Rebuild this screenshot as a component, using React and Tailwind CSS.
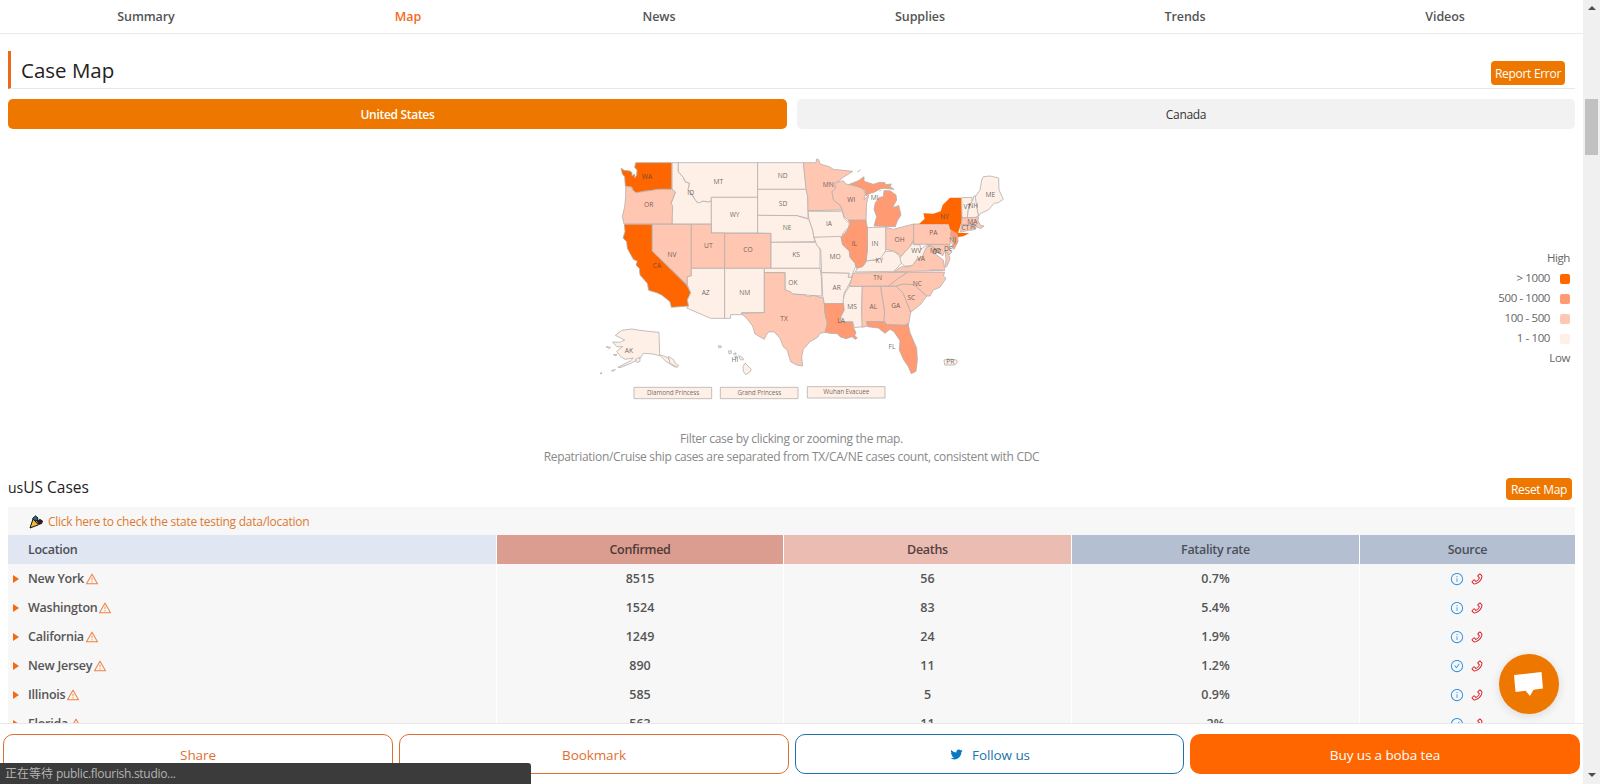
import React from "react";
import {
  AiOutlineWarning,
  AiOutlineInfoCircle,
  AiOutlineCheckCircle,
  AiOutlinePhone,
  AiOutlineTwitter,
} from "react-icons/ai";

const C1 = "#fff0e7";
const C2 = "#ffc6b1";
const C3 = "#ff9a73";
const C4 = "#ff6600";

// Map shapes: [fill, polygon points]. Units are a third of a pixel.
const WEST = [
  [C1, "246,38 265,38 265,65 280,82 285,95 298,100 294,120 305,135 322,158 340,153 355,156 364,152 364,222 246,222 244,160 256,126 246,118"],
  [C1, "265,38 503,38 503,142 364,142 364,152 355,156 340,153 325,159 316,150 305,130 294,120 299,100 286,95 280,82 265,65"],
  [C4, "93,54 102,61 120,63 126,68 126,78 134,72 134,84 140,76 141,60 134,52 137,38 245,38 245,118 205,118 185,122 165,123 150,127 138,128 130,122 126,112 106,108 105,95 104,80 97,72"],
  [C2, "107,110 122,110 130,122 138,128 165,124 205,118 246,118 256,126 250,142 243,158 248,168 246,222 102,222 97,200 104,170 107,140"],
  [C2, "186,223 304,223 304,378 292,380 292,405 186,303"],
  [C4, "103,223 186,223 186,303 290,405 302,428 292,450 296,468 244,472 240,455 215,435 200,428 176,421 172,400 150,375 148,355 138,345 142,334 130,328 112,295 110,275 99,264 105,245"],
  [C1, "364,142 503,142 503,249 364,249"],
  [C2, "304,223 364,223 364,249 404,249 404,355 304,355"],
  [C2, "404,250 543,250 543,355 404,355"],
  [C1, "304,355 404,355 404,505 362,505 290,474 296,468 292,450 302,428 292,405 292,380 304,378"],
  [C1, "404,355 523,355 523,488 455,488 455,494 422,494 422,505 404,505"],
  [C1, "503,38 641,38 645,80 650,118 503,118"],
  [C1, "503,118 650,118 654,140 654,207 645,203 620,197 503,196"],
  [C1, "503,196 620,197 640,203 657,208 668,240 674,275 543,277 543,250 503,249"],
  [C1, "543,277 677,277 684,288 690,300 690,355 543,355"],
  [C1, "523,355 690,355 694,380 696,438 670,437 640,434 610,432 585,420 585,368 523,368"],
  [C2, "523,368 585,368 585,420 600,424 610,433 640,434 655,440 670,436 700,444 703,462 705,490 712,520 706,547 690,550 683,562 660,575 640,598 635,620 638,648 620,645 602,635 592,602 580,590 570,565 553,546 537,545 529,555 523,568 495,552 488,528 470,505 453,490 523,488"],
  [C1, "76,556 95,541 125,537 165,543 207,547 209,614 232,622 245,640 262,650 255,651 228,634 210,617 188,612 160,610 150,626 120,641 90,653 84,652 122,632 130,624 105,628 92,620 80,604 98,590 80,590 68,576 90,577 104,570"],
  [C1, "235,619 250,628 256,640 266,646 262,652 240,640"],
  [C1, "136,628 149,622 150,634 142,638"],
  [C1, "48,590 62,592 58,596"],
  [C1, "70,614 80,613 78,618"],
  [C1, "64,662 76,658 70,664"],
  [C1, "30,671 35,667 35,671"],
  [C1, "385,587 394,588 393,593 386,593"],
  [C1, "415,603 424,602 424,610 417,611"],
  [C1, "430,612 438,608 438,613"],
  [C1, "434,619 441,618 441,624 436,624"],
  [C1, "446,617 458,623 461,629 452,630"],
  [C1, "465,639 484,658 480,666 467,674 460,664 459,650"],
];

const EAST = [
  [C2, "40,38 78,38 80,27 86,29 90,42 118,50 130,58 150,60 188,64 160,82 142,96 135,108 136,116 126,125 130,148 150,165 157,180 54,182 53,140 48,118"],
  [C1, "54,184 157,184 162,205 178,220 176,232 160,248 155,262 72,262 68,240 57,208"],
  [C1, "72,262 152,259 158,283 178,303 180,320 196,340 196,352 188,370 184,382 174,382 178,370 95,368 92,298 80,285"],
  [C1, "95,368 178,370 174,382 188,382 176,405 162,430 160,461 103,461 98,437"],
  [C3, "103,461 160,461 163,480 153,500 153,515 188,515 190,532 198,548 194,556 202,564 196,568 186,560 168,566 150,560 142,551 120,550 105,547 112,520 105,490"],
  [C1, "178,409 217,409 215,480 218,530 193,533 188,515 153,515 153,500 163,480 159,450 165,430"],
  [C2, "217,409 272,409 284,485 282,515 230,515 233,528 216,532 215,480"],
  [C2, "272,409 318,408 340,430 362,487 356,522 345,526 290,524 282,510 284,485"],
  [C3, "230,515 282,515 290,524 345,526 354,520 360,548 380,595 382,630 378,664 364,671 355,650 340,628 328,600 330,572 312,545 300,538 285,550 265,534 233,530"],
  [C2, "318,408 340,402 372,404 380,412 410,438 392,463 362,487 355,468 340,430"],
  [C2, "295,408 325,385 352,367 464,367 460,378 468,385 450,412 430,420 420,438 410,438 380,410 372,404 340,402 318,408"],
  [C2, "190,369 352,367 325,385 295,408 178,409"],
  [C2, "312,365 335,350 360,350 372,340 392,312 410,290 422,288 440,300 436,312 460,330 464,362"],
  [C1, "196,366 205,350 222,345 230,332 260,330 285,305 310,303 325,314 335,330 334,340 312,364"],
  [C1, "333,318 345,305 358,290 366,283 370,270 371,284 390,284 392,298 405,288 418,288 408,294 398,318 380,328 368,346 345,349 334,340 330,326"],
  [C2, "287,232 310,238 340,230 371,222 371,270 358,292 345,305 335,318 310,303 287,298"],
  [C1, "232,233 287,231 287,303 272,325 250,330 228,333 232,300"],
  [C3, "175,210 228,210 232,233 232,300 228,333 218,350 200,355 195,340 180,322 178,303 158,285 154,262 172,240 180,222"],
  [C2, "135,98 160,92 168,102 205,110 220,116 226,130 222,150 236,136 230,160 228,210 175,210 162,200 157,180 150,165 130,150 126,125 136,116"],
  [C3, "178,103 205,92 222,80 222,94 250,103 268,97 285,98 286,104 304,102 300,110 312,118 285,115 272,116 250,128 240,130 228,138 226,120 205,110"],
  [C3, "252,228 260,200 252,178 256,158 268,142 280,140 282,122 300,122 318,135 320,150 308,172 318,170 326,166 333,195 322,212 316,230"],
  [C2, "371,222 478,222 490,240 482,255 494,272 480,283 371,283"],
  [C3, "484,238 502,247 504,275 492,298 484,290 494,272 482,255"],
  [C2, "410,284 478,284 478,300 486,306 470,322 466,300 458,318 440,300 424,288"],
  [C2, "466,300 478,318 480,326 470,350 464,352 468,330"],
  [C4, "387,222 404,206 400,190 430,191 452,184 458,165 480,143 514,143 516,210 508,238 504,248 538,250 520,259 504,261 502,250 480,238 476,222"],
  [C1, "515,143 546,142 546,155 536,170 532,204 516,204"],
  [C1, "546,155 552,138 558,138 562,180 566,195 556,204 532,204 536,170"],
  [C1, "560,170 556,140 570,120 575,90 580,80 600,78 626,84 627,120 640,148 625,158 612,160 595,180 572,190 566,198"],
  [C2, "515,204 556,202 566,200 564,212 572,226 582,228 574,235 562,232 552,222 515,224"],
  [C2, "513,224 542,224 541,240 512,246"],
  [C2, "542,224 552,224 556,238 542,241"],
  [C1, "462,630 475,627 500,630 502,636 495,645 464,645"],
];

const LABELS = [
  ["WA", 171, 80], ["OR", 176, 164], ["CA", 201, 347], ["ID", 302, 128], ["MT", 385, 95], ["WY", 434, 194],
  ["NV", 246, 314], ["UT", 355, 287], ["CO", 474, 299], ["AZ", 347, 428], ["NM", 464, 428], ["TX", 582, 506],
  ["ND", 578, 77], ["SD", 579, 160], ["NE", 591, 233], ["KS", 618, 314], ["OK", 609, 398], ["AK", 117, 602],
  ["HI", 435, 629], ["MN", 715, 104], ["WI", 784, 149], ["MI", 854, 143], ["IA", 717, 221], ["IL", 793, 281],
  ["IN", 855, 281], ["OH", 929, 269], ["MO", 735, 320], ["KY", 868, 332], ["WV", 979, 302], ["VA", 993, 326],
  ["AR", 740, 413], ["TN", 863, 383], ["NC", 982, 401], ["SC", 964, 443], ["MS", 786, 470], ["AL", 850, 470],
  ["GA", 917, 467], ["LA", 753, 512], ["FL", 906, 590], ["PR", 1081, 636], ["PA", 1030, 248], ["NY", 1064, 200],
  ["NJ", 1088, 269], ["DE", 1075, 296], ["MD", 1036, 303], ["DC", 1041, 304], ["CT", 1126, 233], ["RI", 1151, 231],
  ["MA", 1147, 215], ["VT", 1132, 169], ["NH", 1150, 167], ["ME", 1201, 134],
];

const BOXES = [
  ["Diamond Princess", 132, 712],
  ["Grand Princess", 391, 712],
  ["Wuhan Evacuee", 652, 710],
];

function UsMap() {
  return (
    <svg viewBox="0 0 1290 780" className="h-[260px] w-[430px] shrink-0">
      <g stroke="#b5afac" strokeWidth="2.4" strokeLinejoin="round">
        {WEST.map(([fill, points]) => (
          <polygon key={points} fill={fill} points={points} />
        ))}
        <g transform="translate(600 0)">
          {EAST.map(([fill, points]) => (
            <polygon key={points} fill={fill} points={points} stroke={fill === C4 ? "none" : undefined} />
          ))}
          <path d="M202,66 L212,60 M268,124 L274,120 M418,360 L458,360" fill="none" />
        </g>
        {BOXES.map(([name, x, y]) => (
          <rect key={name} x={x} y={y} width="233" height="34" fill={C1} />
        ))}
      </g>
      <g className="font-['Open_Sans',sans-serif]" fill="#444" fillOpacity="0.8" textAnchor="middle" fontSize="20">
        {LABELS.map(([name, x, y]) => (
          <text key={name} x={x} y={y + 7}>{name}</text>
        ))}
        {BOXES.map(([name, x, y]) => (
          <text key={name} x={x + 117} y={y + 23} fontSize="19" letterSpacing="-0.2">{name}</text>
        ))}
      </g>
    </svg>
  );
}

const NAV = [
  ["Summary", "w-[292px]"],
  ["Map", "w-[232px]"],
  ["News", "w-[270px]"],
  ["Supplies", "w-[252px]"],
  ["Trends", "w-[278px]"],
  ["Videos", "w-[242px]"],
];

const LEGEND = [
  ["> 1000", "bg-[#ff6600]"],
  ["500 - 1000", "bg-[#ff9a73]"],
  ["100 - 500", "bg-[#ffc6b1]"],
  ["1 - 100", "bg-[#fff0e7]"],
];

const ROWS = [
  ["New York", "8515", "56", "0.7%", false],
  ["Washington", "1524", "83", "5.4%", false],
  ["California", "1249", "24", "1.9%", false],
  ["New Jersey", "890", "11", "1.2%", true],
  ["Illinois", "585", "5", "0.9%", false],
  ["Florida", "563", "11", "2%", true],
];

const COLS = "grid grid-cols-[488px_286px_287px_287px_215px] gap-x-px";

function PartyPopper() {
  return (
    <svg viewBox="0 0 14 14" className="h-[14px] w-[14px]">
      <path d="M1,13 L4,4 L9.5,9.8 Z" fill="#f5b93a" stroke="#111" strokeWidth="1" strokeLinejoin="round" />
      <path d="M3.5,3.5 L6.5,0.8 L9,3 L8,6 L5.5,5.5 Z" fill="#1d6f80" stroke="#111" strokeWidth="0.9" />
      <path d="M8,6 L11,4.5 L13.5,6 L12.6,8.6 L10,9.2 Z" fill="#4a1420" stroke="#111" strokeWidth="1" />
    </svg>
  );
}

export default function App() {
  return (
    <div className="relative flex h-[784px] w-[1600px] overflow-hidden bg-white font-['Open_Sans','Noto_Sans_CJK_SC',sans-serif] text-[12.5px] text-[#555]">
      <div className="flex w-[1583px] flex-col">
        <nav className="flex h-[34px] shrink-0 items-center border-b border-[#ebebeb] pt-[2px] font-semibold tracking-[-0.1px]">
          {NAV.map(([name, width]) => (
            <a key={name} className={`${width} text-center ${name === "Map" ? "text-[#f56a1d]" : ""}`}>
              {name}
            </a>
          ))}
        </nav>

        <main className="min-h-0 flex-1 overflow-hidden px-2">
          <header className="mt-[17px] flex h-[38px] w-[1567px] items-center justify-between border-b border-l-[3px] border-b-[#e8e8e8] border-l-[#ec6a1a] pr-[10px] pl-[10px]">
            <h1 className="pt-[2px] text-[20.5px] text-[#222]">Case Map</h1>
            <button className="mt-[7px] h-6 w-[74px] rounded bg-[#ee7700] pt-[2px] text-[12px] tracking-[-0.3px] whitespace-nowrap text-white">Report Error</button>
          </header>

          <div className="mt-[10px] flex h-[30px] w-[1567px] gap-[10px]">
            <button className="w-[779px] rounded-[5px] bg-[#ee7700] pt-[2px] text-[12px] font-semibold tracking-[-0.3px] text-white">United States</button>
            <button className="w-[778px] rounded-[5px] bg-[#f2f2f2] pt-[2px] text-[12px] tracking-[-0.3px] text-[#333]">Canada</button>
          </div>

          <section className="mt-[21px] flex w-[1562px] justify-between">
            <div className="w-[582px] shrink-0" />
            <UsMap />
            <ul className="mt-[98px] flex-1 text-right text-[11.5px] leading-[20px] tracking-[-0.4px] text-[#666]">
              <li>High</li>
              {LEGEND.map(([name, color]) => (
                <li key={name} className="flex items-center justify-end gap-[10px]">
                  {name}
                  <span className={`mt-[2px] h-[10px] w-[10px] rounded-[2px] ${color}`} />
                </li>
              ))}
              <li>Low</li>
            </ul>
          </section>

          <div className="mt-[20px] text-center text-[12px] leading-[18px] tracking-[-0.3px] text-[#888]">
            <p>Filter case by clicking or zooming the map.</p>
            <p>Repatriation/Cruise ship cases are separated from TX/CA/NE cases count, consistent with CDC</p>
          </div>

          <div className="mt-[12px] flex h-[22px] w-[1564px] items-center justify-between">
            <h2 className="pb-[2px] text-[15.5px] text-[#222]"><span className="text-[14px]">us</span>US Cases</h2>
            <button className="h-[22px] w-[66px] rounded bg-[#ee7700] pt-[2px] text-[12px] tracking-[-0.3px] whitespace-nowrap text-white">Reset Map</button>
          </div>

          <div className="mt-[7px] flex h-[28px] w-[1567px] items-center gap-[5px] bg-[#f7f7f7] pt-[2px] pl-[21px] text-[12px] tracking-[-0.26px] text-[#dd7a30]">
            <PartyPopper />
            <a>Click here to check the state testing data/location</a>
          </div>

          <div className={`${COLS} h-[28px] text-center leading-[29px] font-semibold tracking-[-0.3px] text-[#4b5058]`}>
            <div className="bg-[#e1e6f3] pl-[20px] text-left">Location</div>
            <div className="bg-[#da9d8f] text-[#4f3a38]">Confirmed</div>
            <div className="bg-[#ebbcb2] text-[#54423f]">Deaths</div>
            <div className="bg-[#b4bfd2]">Fatality rate</div>
            <div className="bg-[#b4bfd2]">Source</div>
          </div>

          {ROWS.map(([name, confirmed, deaths, rate, verified]) => (
            <div key={name} className={`${COLS} mt-px h-[28px] text-center leading-[29px] font-semibold text-[#555]`}>
              <div className="flex items-center bg-[#f7f7f7] pl-[5px]">
                <svg viewBox="0 0 6 8" className="mr-[9px] h-[8px] w-[6px]"><path d="M0,0 L6,4 L0,8 Z" fill="#f36a10" /></svg>
                <span className="tracking-[-0.25px]">{name}</span>
                <AiOutlineWarning className="ml-[1px] h-[14px] w-[14px] text-[#f28040]" />
              </div>
              <div className="bg-[#f7f7f7]">{confirmed}</div>
              <div className="bg-[#f7f7f7]">{deaths}</div>
              <div className="bg-[#f7f7f7]">{rate}</div>
              <div className="flex items-center justify-center gap-[6px] bg-[#f7f7f7] pt-[1px] pr-[1px]">
                {verified ? (
                  <AiOutlineCheckCircle className="h-[14px] w-[14px] text-[#3c97e0]" />
                ) : (
                  <AiOutlineInfoCircle className="h-[14px] w-[14px] text-[#3c97e0]" />
                )}
                <AiOutlinePhone className="h-[14px] w-[14px] text-[#d9202c]" />
              </div>
            </div>
          ))}
        </main>

        <footer className="flex h-[61px] shrink-0 gap-[6px] border-t border-[#e8e8e8] bg-white pt-[10px] pl-[3px] text-[13.5px] tracking-[-0.1px]">
          <button className="h-[40px] w-[390px] rounded-[10px] border border-[#dd7030] pt-[2px] text-[#dd7030]">Share</button>
          <button className="h-[40px] w-[390px] rounded-[10px] border border-[#dd7030] pt-[2px] text-[#dd7030]">Bookmark</button>
          <button className="flex h-[40px] w-[389px] items-center justify-center gap-2 rounded-[10px] border border-[#1a74ab] text-[#1a74ab]">
            <AiOutlineTwitter className="h-[15px] w-[15px] text-[#0a78c0]" />
            <span className="pt-[2px]">Follow us</span>
          </button>
          <button className="h-[40px] w-[390px] rounded-[10px] bg-[#ff6600] pt-[2px] text-white">Buy us a boba tea</button>
        </footer>
      </div>

      <div className="flex w-[17px] flex-col items-center bg-[#f0f0f0]">
        <svg viewBox="0 0 8 4" className="mt-[6px] h-[4px] w-[8px]"><path d="M0,4 L4,0 L8,4 Z" fill="#4d4d4d" /></svg>
        <div className="mt-[89px] h-[56px] w-[13px] bg-[#c1c1c1]" />
        <svg viewBox="0 0 8 4" className="mt-auto mb-[7px] h-[4px] w-[8px]"><path d="M0,0 L4,4 L8,0 Z" fill="#4d4d4d" /></svg>
      </div>

      <div className="absolute top-[654px] left-[1499px] flex h-[60px] w-[60px] items-center justify-center rounded-full bg-[#ee7700] shadow-[0_2px_10px_rgba(0,0,0,0.12)]">
        <svg viewBox="0 0 30 26" className="h-[26px] w-[30px]"><path d="M0,4 L27.5,1 L29,17.5 L19.5,18.7 L16,25 L11.5,19.7 L1.5,21 Z" fill="#fff" /></svg>
      </div>

      <div className="absolute top-[763px] left-0 flex h-[21px] w-[531px] items-center rounded-tr-[3px] bg-[#3b3b3b] pt-px pl-[5px] text-[12px] tracking-[-0.2px] text-[#b4b4b4]">
        <span className="tracking-normal">正在等待</span>&nbsp;<span className="tracking-[-0.3px]">public.flourish.studio...</span>
      </div>
    </div>
  );
}
